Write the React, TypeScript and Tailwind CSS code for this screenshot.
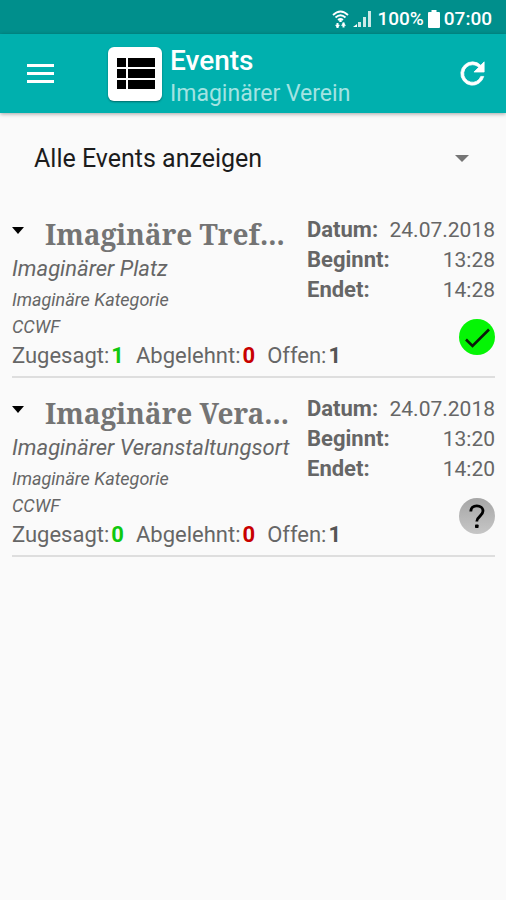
import { useState } from "react";

type Status = "accepted" | "open";

interface ClubEvent {
  title: string;
  place: string;
  category: string;
  group: string;
  date: string;
  start: string;
  end: string;
  yes: number;
  no: number;
  pending: number;
  status: Status;
}

const EVENTS: ClubEvent[] = [
  {
    title: "Imaginäre Tref...",
    place: "Imaginärer Platz",
    category: "Imaginäre Kategorie",
    group: "CCWF",
    date: "24.07.2018",
    start: "13:28",
    end: "14:28",
    yes: 1,
    no: 0,
    pending: 1,
    status: "accepted",
  },
  {
    title: "Imaginäre Vera...",
    place: "Imaginärer Veranstaltungsort",
    category: "Imaginäre Kategorie",
    group: "CCWF",
    date: "24.07.2018",
    start: "13:20",
    end: "14:20",
    yes: 0,
    no: 0,
    pending: 1,
    status: "open",
  },
];

function StatusBar() {
  return (
    <div className="flex h-[34px] items-center justify-end bg-[#008f8c] pt-1 pr-3.5 text-[19px] leading-6 font-medium text-white">
      <svg className="mr-1 h-[19px] w-[17px]" viewBox="0 0 17 19" fill="none" stroke="currentColor" strokeWidth="1.8">
        <path d="M1 5Q8.5-2 16 5M3.5 7.5Q8.5 3 13.5 7.5M6 10Q8.5 8 11 10" />
        <path d="M8.5 9v3" strokeWidth="2.4" />
        <path d="M5.5 18v-5M11.5 12.5v5" strokeWidth="2" />
        <path d="M3.5 15l2 2.8 2-2.8zM9.5 15.5l2-2.8 2 2.8z" fill="currentColor" strokeWidth="0.5" />
      </svg>
      <svg className="mr-1.5 h-[18px] w-[18px]" viewBox="0 0 18 18" fill="currentColor">
        <path d="M0 17l4-3v3z" />
        <path d="M5 12h3v5H5zM10 7h3v10h-3zM15 1h3v16h-3z" opacity="0.8" />
      </svg>
      <span>100%</span>
      <svg className="mx-1 h-[18px] w-3" viewBox="0 0 12 18" fill="currentColor">
        <path d="M3.5 0h5v2H11q1 0 1 1v14q0 1-1 1H1q-1 0-1-1V3q0-1 1-1h2.5z" />
      </svg>
      <span>07:00</span>
    </div>
  );
}

function Header() {
  return (
    <header className="flex h-[79px] items-center bg-[#00b0ae] pr-4 pl-6 text-white shadow-[0_1px_4px_rgba(0,0,0,0.35)]">
      <button type="button" aria-label="Menü" className="flex size-8 items-center justify-center">
        <svg className="h-5 w-[27px]" viewBox="0 0 27 20" fill="currentColor">
          <path d="M0 0h27v3H0zM0 8h27v3H0zM0 16h27v3H0z" />
        </svg>
      </button>
      <div className="ml-[52px] flex size-[54px] items-center justify-center rounded-md bg-white pl-0.5 shadow-[0_1px_2px_rgba(0,0,0,0.4)]">
        <svg className="h-8 w-[38px]" viewBox="0 0 38 32" fill="#000">
          <path d="M0 0h9v9H0zM11 0h27v9H11zM0 11h9v9H0zM11 11h27v9H11zM0 22h9v9H0zM11 22h27v9H11z" />
        </svg>
      </div>
      <div className="ml-2 flex-1 pt-2">
        <h1 className="text-[28px] leading-8 font-medium">Events</h1>
        <p className="text-[23px] leading-[34px] text-[#a3e3e2]">Imaginärer Verein</p>
      </div>
      <button type="button" aria-label="Aktualisieren" className="flex size-[35px] items-center justify-center">
        <svg className="size-[35px]" viewBox="0 0 24 24" fill="currentColor" stroke="currentColor" strokeWidth="0.5">
          <path d="M17.65 6.35A7.95 7.95 0 0 0 12 4a8 8 0 1 0 7.73 10h-2.08A6 6 0 1 1 12 6c1.66 0 3.14.69 4.22 1.78L13 11h7V4z" />
        </svg>
      </button>
    </header>
  );
}

function StatusIcon({ status }: { status: Status }) {
  if (status === "accepted") {
    return (
      <svg className="size-9" viewBox="0 0 36 36" role="img" aria-label="Zugesagt">
        <circle cx="18" cy="18" r="18" fill="#05f505" />
        <path d="M7 20.5l6.5 6.5L30 10.5" fill="none" stroke="#0a1a0a" strokeWidth="2.6" />
      </svg>
    );
  }
  return (
    <svg className="size-9" viewBox="0 0 36 36" role="img" aria-label="Offen">
      <defs>
        <linearGradient id="openFill" x1="0" y1="0" x2="0" y2="1">
          <stop offset="0" stopColor="#a6a6a6" />
          <stop offset="1" stopColor="#c6c6c6" />
        </linearGradient>
      </defs>
      <circle cx="18" cy="18" r="18" fill="url(#openFill)" />
      <path d="M11.8 13.5c0-3.5 2.4-5.7 6-5.7s6.2 2 6.2 5.3c0 4.8-6.2 5.2-6.2 10.4" fill="none" stroke="#000" strokeWidth="2.8" />
      <rect x="16" y="26.5" width="3.6" height="3.6" rx="0.8" fill="#000" />
    </svg>
  );
}

function Count({ label, value, color }: { label: string; value: number; color: string }) {
  return (
    <span className="flex gap-0.5">
      <span>{label}</span> <b className={color}>{value}</b>
    </span>
  );
}

function EventRow({ event }: { event: ClubEvent }) {
  return (
    <li className="mb-4 border-b-2 border-[#dedede] text-[#666]">
      <div className="flex justify-between">
        <div className="min-w-0">
          <div className="flex h-[38px] items-center">
            <button type="button" aria-label="Details anzeigen" className="flex h-8 w-[33px] items-center">
              <svg className="mb-2 h-[7px] w-3" viewBox="0 0 12 7" fill="#000">
                <path d="M0 0h12L6 7z" />
              </svg>
            </button>
            <h2 className="font-['Noto_Serif','DejaVu_Serif_Condensed','DejaVu_Serif',serif] text-[28px] leading-9 font-bold whitespace-nowrap text-[#747474]">
              {event.title}
            </h2>
          </div>
          <p className="text-[22px] leading-8 whitespace-nowrap italic">{event.place}</p>
          <p className="text-[18px] leading-[30px] italic">{event.category}</p>
          <p className="text-[18px] leading-6 italic">{event.group}</p>
        </div>
        <div className="flex w-[188px] shrink-0 flex-col items-end">
          <dl className="w-full text-[21px] leading-[30px]">
            <div className="flex justify-between">
              <dt className="text-[22px] font-bold">Datum:</dt>
              <dd>{event.date}</dd>
            </div>
            <div className="flex justify-between">
              <dt className="text-[22px] font-bold">Beginnt:</dt>
              <dd>{event.start}</dd>
            </div>
            <div className="flex justify-between">
              <dt className="text-[22px] font-bold">Endet:</dt>
              <dd>{event.end}</dd>
            </div>
          </dl>
          <div className="mt-3.5 -mb-5">
            <StatusIcon status={event.status} />
          </div>
        </div>
      </div>
      <div className="flex gap-3 pt-px pb-1 text-[22px] leading-8">
        <Count label="Zugesagt:" value={event.yes} color="text-[#0fc80f]" />
        <Count label="Abgelehnt:" value={event.no} color="text-[#c80000]" />
        <Count label="Offen:" value={event.pending} color="text-[#555]" />
      </div>
    </li>
  );
}

export default function App() {
  const [filter, setFilter] = useState("all");
  return (
    <div className="min-h-screen bg-[#fafafa] font-[Roboto,'Noto_Sans',sans-serif]">
      <StatusBar />
      <Header />
      <main className="pr-[11px] pl-3">
        <div className="relative pt-5">
          <select
            aria-label="Filter"
            value={filter}
            onChange={(e) => setFilter(e.target.value)}
            className="h-[52px] w-full appearance-none bg-transparent px-[22px] text-[25px] leading-8 text-[#1c1c1c]"
          >
            <option value="all">Alle Events anzeigen</option>
          </select>
          <svg className="pointer-events-none absolute top-[42px] right-[26px] h-[7px] w-[14px]" viewBox="0 0 14 7" fill="#757575">
            <path d="M0 0h14L7 7z" />
          </svg>
        </div>
        <ul className="pt-[30px]">
          {EVENTS.map((event) => (
            <EventRow key={event.title} event={event} />
          ))}
        </ul>
      </main>
    </div>
  );
}
